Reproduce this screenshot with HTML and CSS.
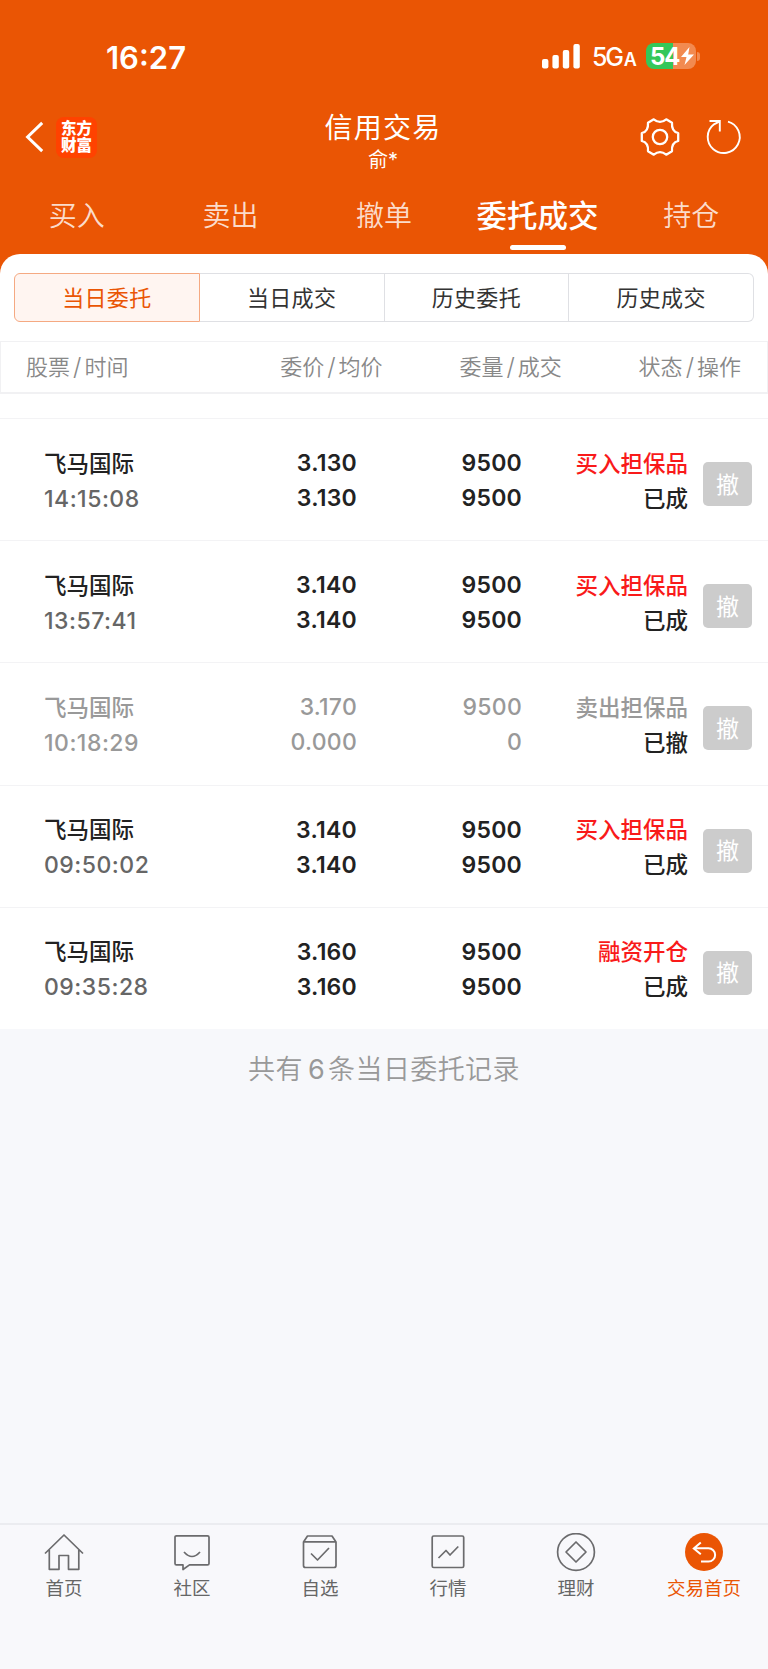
FILE: index.html
```
<!DOCTYPE html>
<html lang="zh-CN">
<head>
    <meta charset="UTF-8">
    <meta name="viewport" content="width=device-width, initial-scale=1.0">
    <title>信用交易</title>
    <link rel="stylesheet" href="styles.css">
</head>
<body>
    <header class="top">
        <div class="status-bar">
            <span class="clock">16:27</span>
            <div class="status-right">
                <svg class="signal" width="39" height="25" viewBox="0 0 39 25" fill="#fff">
                    <rect x="0" y="15" width="6.4" height="9.5" rx="2"/>
                    <rect x="10.4" y="11" width="6.4" height="13.5" rx="2"/>
                    <rect x="20.8" y="6" width="6.4" height="18.5" rx="2"/>
                    <rect x="31.4" y="0" width="6.4" height="24.5" rx="2"/>
                </svg>
                <span class="network">5G<small>A</small></span>
                <div class="battery">
                    <span>54</span>
                    <svg width="13" height="18" viewBox="0 0 13 18"><path d="M8.5 0L0 10H5.5L3.5 18L13 7.5H7.2Z" fill="#fff"/></svg>
                </div>
                <i class="battery-nub"></i>
            </div>
        </div>
        <div class="title-bar">
            <div class="side">
                <svg class="back" width="19" height="32" viewBox="0 0 19 32" fill="none" stroke="#fff" stroke-width="3"><path d="M17.2 1.8L2.6 16L17.2 30.2"/></svg>
                <div class="logo">东方<br>财富</div>
            </div>
            <div class="title">
                <h1>信用交易</h1>
                <p>俞*</p>
            </div>
            <div class="side right">
                <svg width="42" height="42" viewBox="-21 -21 42 42" fill="none" stroke="#fff" stroke-width="2.3" stroke-linejoin="round">
                    <path d="M-6.2 -17.7Q0 -12.6 6.2 -17.7L12 -14.2C11.6 -8.6 13.6 -5 18.2 -4V4C13.6 5 11.6 8.6 12 14.2L6.2 17.7Q0 12.6 -6.2 17.7L-12 14.2C-11.6 8.6 -13.6 5 -18.2 4V-4C-13.6 -5 -11.6 -8.6 -12 -14.2Z"/>
                    <circle r="7.2"/>
                </svg>
                <svg width="42" height="42" viewBox="-21 -21 42 42" fill="none" stroke="#fff" stroke-width="1.9">
                    <path d="M4 -15.4A16 16 0 1 1 -10 -12.7L-4.3 -15.7"/>
                    <path d="M-14.5 -16H-4.2V-5.5"/>
                </svg>
            </div>
        </div>
        <nav class="tabs">
            <a>买入</a>
            <a>卖出</a>
            <a>撤单</a>
            <a class="active">委托成交</a>
            <a>持仓</a>
        </nav>
    </header>

    <main>
        <div class="segments">
            <button class="active">当日委托</button>
            <button>当日成交</button>
            <button>历史委托</button>
            <button>历史成交</button>
        </div>
        <div class="list-head">
            <span>股票<b>/</b>时间</span>
            <span>委价<b>/</b>均价</span>
            <span>委量<b>/</b>成交</span>
            <span>状态<b>/</b>操作</span>
        </div>
        <div class="order">
            <div class="stock">飞马国际<br><span class="time">14:15:08</span></div>
            <div class="num">3.130<br>3.130</div>
            <div class="num">9500<br>9500</div>
            <div class="state"><span class="buy">买入担保品</span><br>已成</div>
            <button class="cancel">撤</button>
        </div>
        <div class="order">
            <div class="stock">飞马国际<br><span class="time">13:57:41</span></div>
            <div class="num">3.140<br>3.140</div>
            <div class="num">9500<br>9500</div>
            <div class="state"><span class="buy">买入担保品</span><br>已成</div>
            <button class="cancel">撤</button>
        </div>
        <div class="order revoked">
            <div class="stock">飞马国际<br><span class="time">10:18:29</span></div>
            <div class="num">3.170<br>0.000</div>
            <div class="num">9500<br>0</div>
            <div class="state"><span class="sell">卖出担保品</span><br>已撤</div>
            <button class="cancel">撤</button>
        </div>
        <div class="order">
            <div class="stock">飞马国际<br><span class="time">09:50:02</span></div>
            <div class="num">3.140<br>3.140</div>
            <div class="num">9500<br>9500</div>
            <div class="state"><span class="buy">买入担保品</span><br>已成</div>
            <button class="cancel">撤</button>
        </div>
        <div class="order">
            <div class="stock">飞马国际<br><span class="time">09:35:28</span></div>
            <div class="num">3.160<br>3.160</div>
            <div class="num">9500<br>9500</div>
            <div class="state"><span class="buy">融资开仓</span><br>已成</div>
            <button class="cancel">撤</button>
        </div>
    </main>
    <p class="summary">共有<span>6</span>条当日委托记录</p>

    <footer>
        <a>
            <svg viewBox="0 0 40 40"><path d="M1 20.5L20 2L39 20.5M5.3 17V36.3H15V22.5H24.5V36.3H34.8V17"/></svg>
            首页
        </a>
        <a>
            <svg viewBox="0 0 40 40"><path d="M4.5 2.8H35.5Q37 2.8 37 4.3V30.4Q37 31.9 35.5 31.9H17.5L11 36.5V31.9H4.5Q3 31.9 3 30.4V4.3Q3 2.8 4.5 2.8ZM12 19Q20 28 28 19"/></svg>
            社区
        </a>
        <a>
            <svg viewBox="0 0 40 40"><path d="M3.5 9L7.5 3H32L36 9V32.5Q36 34.5 34 34.5H5.5Q3.5 34.5 3.5 32.5ZM3.5 8.8H36M11 20.5L17.5 27L29 15"/></svg>
            自选
        </a>
        <a>
            <svg viewBox="0 0 40 40"><rect x="4.2" y="3" width="31.5" height="31.5" rx="1.5"/><path d="M10.5 25L18 17.5L22 22L30.3 13.5"/></svg>
            行情
        </a>
        <a>
            <svg viewBox="0 0 40 40"><circle cx="20" cy="19" r="18.4"/><path d="M20 9L30 19L20 29L10 19Z"/></svg>
            理财
        </a>
        <a class="active">
            <svg viewBox="0 0 40 40"><circle cx="20" cy="19" r="19" class="disc"/><path d="M16.8 9.5L9.8 15.5L16.8 21.2M10.5 15.3H24.5A6.6 6.6 0 0 1 24.5 28.6H17"/></svg>
            交易首页
        </a>
    </footer>
</body>
</html>
```
FILE: styles.css
```
* { box-sizing: border-box; }
body {
    margin: 0;
    height: 1669px;
    display: flex;
    flex-direction: column;
    font-family: Inter, 'Noto Sans CJK SC', sans-serif;
    background: #f7f8fb;
    color: #222;
}
svg { display: block; }
h1, p { margin: 0; }
button { font-family: inherit; margin: 0; padding: 0; }

/* orange top area */
.top {
    height: 274px;
    background: #ea5504;
    color: #fff;
}
.status-bar {
    height: 112px;
    padding: 0 68px 0 106px;
    display: flex;
    justify-content: space-between;
    align-items: center;
}
.clock { font-size: 31px; font-weight: 600; line-height: 40px; margin-top: 3px; }
.status-right { display: flex; align-items: center; }
.network {
    margin: 5px 0 0 11px;
    width: 54px;
    font-size: 25px;
    font-weight: 500;
    line-height: 30px;
    letter-spacing: -2.2px;
}
.network small { font-size: 18px; font-weight: 600; margin-left: 2px; }
.battery {
    width: 50px;
    height: 26px;
    border-radius: 8px;
    background: linear-gradient(90deg, #34c759 27px, #f28a50 27px);
    display: flex;
    align-items: center;
    padding-left: 4px;
    font-size: 24px;
    font-weight: 700;
    letter-spacing: -1px;
}
.battery svg { margin-left: 1px; flex: none; }
.battery-nub {
    width: 3px;
    height: 9px;
    margin-left: 1px;
    border-radius: 0 4px 4px 0;
    background: #f28a50;
}
.title-bar {
    height: 66px;
    display: grid;
    grid-template-columns: 1fr auto 1fr;
    padding: 0 23px 0 25px;
}
.side { display: flex; align-items: center; height: 50px; }
.side.right { justify-content: flex-end; gap: 22px; }
.logo {
    width: 41px;
    height: 41px;
    margin-left: 12px;
    border-radius: 8px;
    background: #ff4200;
    font-size: 15.5px;
    font-weight: 900;
    line-height: 17px;
    text-align: center;
    padding-top: 3px;
}
.title { text-align: center; margin-right: 4px; }
h1 { font-size: 28px; font-weight: 400; line-height: 32px; letter-spacing: 1.2px; }
.title p { font-size: 20px; line-height: 32px; }
.tabs { display: grid; grid-template-columns: repeat(5, 1fr); }
.tabs a {
    display: flex;
    flex-direction: column;
    align-items: center;
    font-size: 28px;
    font-weight: 350;
    line-height: 76px;
    height: 76px;
    color: #fbdccb;
}
.tabs .active { font-size: 30.5px; font-weight: 500; color: #fff; }
.tabs .active::after {
    content: "";
    width: 56px;
    height: 5px;
    margin-top: -9px;
    border-radius: 3px;
    background: #fff;
    flex: none;
}

/* orders */
main {
    background: #fff;
    border-radius: 20px 20px 0 0;
    margin-top: -20px;
    padding-top: 19px;
}
.segments { display: flex; margin: 0 14px; height: 49px; }
.segments button {
    flex: 1;
    padding-bottom: 3px;
    border: 1px solid #dfe0e4;
    border-left-width: 0;
    background: #fff;
    font-size: 22px;
    color: #333;
    letter-spacing: .3px;
}
.segments button:last-child { border-radius: 0 6px 6px 0; }
.segments .active {
    border: 1.5px solid #f5a982;
    border-radius: 6px 0 0 6px;
    background: #fff5f1;
    color: #ea5504;
}
.list-head {
    display: flex;
    justify-content: space-between;
    height: 53px;
    margin-top: 19px;
    padding: 0 26px 0 25px;
    border: 1px solid #f1f1f3;
    border-bottom-width: 2px;
    font-size: 22px;
    font-weight: 350;
    line-height: 50px;
    color: #888;
    margin-bottom: 24px;
}
.list-head span:nth-child(2) { margin-left: 75px; }
.list-head b { font-weight: 300; font-size: 24px; margin: 0 3px; }
.order {
    display: grid;
    grid-template-columns: 150px 163px 165px 166px 49px;
    padding-left: 44px;
    height: 122.2px;
    align-items: center;
    border-top: 1px solid #f3f3f5;
    font-size: 22.5px;
    font-weight: 500;
    line-height: 35px;
}
.stock, .num { padding-top: 3px; }
.state { padding-top: 2px; }
.time { color: #666; font-size: 23px; letter-spacing: .5px; }
.num { text-align: right; font-size: 23px; font-weight: 600; letter-spacing: .25px; }
.state { text-align: right; }
.buy { color: #f91a1a; }
.cancel {
    margin: 9px 0 0 15px;
    padding-bottom: 3px;
    width: 49px;
    height: 44px;
    border: 0;
    border-radius: 5px;
    background: #ccc;
    color: #fff;
    font-size: 23px;
}
.revoked .stock, .revoked .time, .revoked .num, .sell { color: #999; }
.revoked .num { font-weight: 500; }
.summary {
    margin-top: 21px;
    text-align: center;
    font-size: 27px;
    font-weight: 350;
    line-height: 40px;
    letter-spacing: .4px;
    color: #999;
}
.summary span { font-weight: 400; margin: 0 3px 0 5px; }

/* bottom navigation */
footer {
    height: 146px;
    margin-top: auto;
    border-top: 2px solid #ebecf0;
    background: #f8f8fb;
    display: grid;
    grid-template-columns: repeat(6, 1fr);
}
footer a {
    display: flex;
    flex-direction: column;
    align-items: center;
    padding-top: 8px;
    font-size: 18.5px;
    line-height: 30px;
    color: #666;
}
footer svg {
    width: 40px;
    height: 40px;
    fill: none;
    stroke: #6b6b6d;
    stroke-width: 1.7;
    stroke-linejoin: round;
}
footer .active { color: #ea5504; }
footer .active svg { stroke: #fff; stroke-width: 2; stroke-linejoin: miter; }
footer .disc { fill: #ea5504; stroke: none; }
```
